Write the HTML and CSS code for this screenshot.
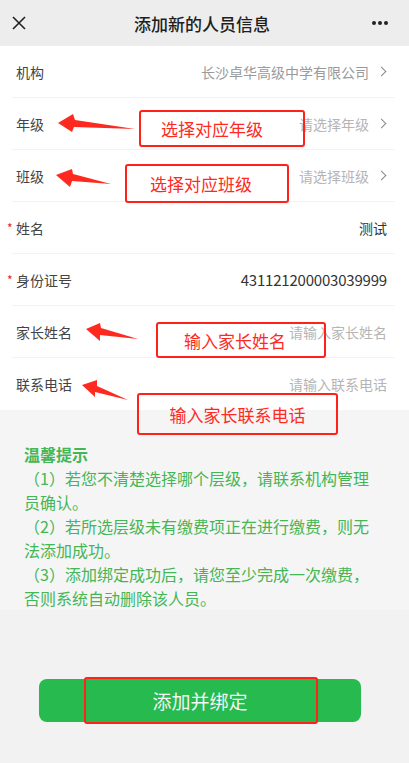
FILE: index.html
```html
<!DOCTYPE html>
<html>
	<head>
		<meta charset="UTF-8">
		<title>添加新的人员信息</title>
		<link rel="stylesheet" href="styles.css">
	</head>
	<body>
		<div id="page">
			<div class="topbar">
				<svg class="close" width="14" height="14" viewBox="0 0 14 14"><path d="M1 1L13 13M13 1L1 13" stroke="#222" stroke-width="1.6" fill="none"/></svg>
				<div class="title">添加新的人员信息</div>
				<div class="more"><i></i><i></i><i></i></div>
			</div>

			<div class="form">
				<div class="row">
					<span class="label">机构</span>
					<span class="value gray">长沙卓华高级中学有限公司<b class="arrow"></b></span>
				</div>
				<div class="row">
					<span class="label">年级</span>
					<span class="value holder">请选择年级<b class="arrow"></b></span>
				</div>
				<div class="row">
					<span class="label">班级</span>
					<span class="value holder">请选择班级<b class="arrow"></b></span>
				</div>
				<div class="row">
					<span class="label req">姓名</span>
					<span class="value">测试</span>
				</div>
				<div class="row">
					<span class="label req">身份证号</span>
					<span class="value num">431121200003039999</span>
				</div>
				<div class="row">
					<span class="label">家长姓名</span>
					<span class="value holder">请输入家长姓名</span>
				</div>
				<div class="row last">
					<span class="label">联系电话</span>
					<span class="value holder">请输入联系电话</span>
				</div>
			</div>

			<div class="tips">
				<h3>温馨提示</h3>
				<p>（1）若您不清楚选择哪个层级，请联系机构管理员确认。</p>
				<p>（2）若所选层级未有缴费项正在进行缴费，则无法添加成功。</p>
				<p>（3）添加绑定成功后，请您至少完成一次缴费，否则系统自动删除该人员。</p>
			</div>

			<div class="foot">
				<div class="btn">添加并绑定</div>
			</div>

			<!-- 标注 -->
			<svg class="marks" width="409" height="763" viewBox="0 0 409 763">
				<polygon points="58,123 73,114 75,120 135,129 74,127 72,132" fill="#ff2a1f"/>
				<polygon points="56,175 72,169 73,174 111,184 72,181 70,187" fill="#ff2a1f"/>
				<polygon points="86,329 100,323 101,328 138,339 100,335 100,341" fill="#ff2a1f"/>
				<polygon points="82,385 97,380 97,386 128,400 95,392 95,397" fill="#ff2a1f"/>
			</svg>
			<div class="note n1">选择对应年级</div>
			<div class="note n2">选择对应班级</div>
			<div class="note n3">输入家长姓名</div>
			<div class="note n4">输入家长联系电话</div>
			<div class="note n5"></div>
		</div>
	</body>
</html>
```

FILE: styles.css
```css
*{margin: 0;padding: 0;box-sizing: border-box;}
body{font-family: "Noto Sans CJK SC", "Noto Sans", sans-serif;background: #f2f2f2;color: #333;}
#page{width: 409px;height: 763px;position: relative;overflow: hidden;background: #f2f2f2;}

.topbar{height: 46px;background: #ededed;display: flex;align-items: center;justify-content: space-between;padding: 0 21px 0 12px;}
.title{font-size: 17px;font-weight: 500;color: #1e1e1e;margin-left: 6px;}
.more{display: flex;gap: 2px;}
.more i{width: 4px;height: 4px;border-radius: 50%;background: #222;}

.form{background: #fff;}
.row{height: 52px;margin: 0 14px 0 12px;padding: 0 8px 0 4px;display: flex;align-items: center;justify-content: space-between;border-bottom: 1px solid #f3f3f3;font-size: 14px;}
.row.last{border-bottom: none;}
.label{color: #444;position: relative;}
.label.req::before{content: "*";position: absolute;left: -9px;top: 1px;color: #d9262a;font-size: 12px;}
.value{display: flex;align-items: center;color: #333;}
.value.gray{color: #9a9a9a;}
.value.holder{color: #b5b5b5;}
.value.num{font-size: 15px;color: #333;letter-spacing: -0.2px;}
.arrow{width: 7px;height: 7px;border-top: 1.3px solid #888;border-right: 1.3px solid #888;transform: rotate(45deg);margin: 0 2px 0 9px;}

.tips{background: #f5f5f5;padding: 32px 32px 0 24px;height: 200px;color: #44b655;}
.tips h3{font-size: 16px;line-height: 24px;font-weight: bold;}
.tips p{font-size: 16px;line-height: 24px;}

.foot{padding: 69px 48px 0 39px;}
.btn{height: 43px;border-radius: 8px;background: #26ba4f;color: #f4f4f4;font-size: 19px;display: flex;align-items: center;justify-content: center;}

.marks{position: absolute;left: 0;top: 0;pointer-events: none;}
.note{position: absolute;border: 2.5px solid #ff2218;border-radius: 3px;color: #ff2a1f;font-size: 17px;display: flex;align-items: center;justify-content: center;}
.n1{left: 139px;top: 110px;width: 166px;height: 37px;padding-right: 20px;}
.n2{left: 125px;top: 164px;width: 164px;height: 39px;padding-right: 12px;}
.n3{left: 156px;top: 322px;width: 170px;height: 36px;padding-right: 12px;}
.n4{left: 137px;top: 393px;width: 201px;height: 42px;}
.n5{left: 84px;top: 677px;width: 234px;height: 47px;}
```
